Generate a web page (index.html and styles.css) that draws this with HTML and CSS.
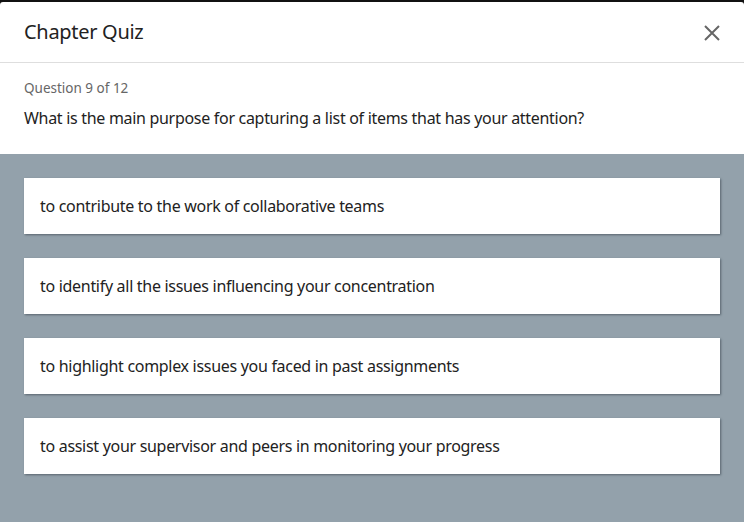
FILE: index.html
```html
<!DOCTYPE html>
<html>
<head>
<meta charset="utf-8">
<link rel="stylesheet" href="styles.css">
</head>
<body>
<div class="modal">
  <header class="modal-header">
    <h1 class="title">Chapter Quiz</h1>
    <button class="close" aria-label="Close">
      <svg width="16" height="16" viewBox="0 0 16 16"><path d="M1 1 L15 15 M15 1 L1 15" stroke="#666" stroke-width="2" fill="none"/></svg>
    </button>
  </header>
  <section class="question">
    <div class="counter">Question 9 of 12</div>
    <div class="prompt">What is the main purpose for capturing a list of items that has your attention?</div>
  </section>
  <section class="answers">
    <div class="answer">to contribute to the work of collaborative teams</div>
    <div class="answer">to identify all the issues influencing your concentration</div>
    <div class="answer">to highlight complex issues you faced in past assignments</div>
    <div class="answer">to assist your supervisor and peers in monitoring your progress</div>
  </section>
</div>
</body>
</html>
```
FILE: styles.css
```css
html, body { margin: 0; padding: 0; height: 100%; }
body {
  background: #111;
  padding-top: 2px;
  box-sizing: border-box;
  font-family: "Noto Sans", "Open Sans", sans-serif;
  overflow: hidden;
}
.modal {
  background: #fff;
  height: 100%;
  display: flex;
  flex-direction: column;
  border-radius: 3px 3px 0 0;
  overflow: hidden;
}
.modal-header {
  height: 60px;
  border-bottom: 1px solid #dedede;
  display: flex;
  align-items: center;
  justify-content: space-between;
  padding: 0 24px;
}
.title {
  margin: 0;
  font-size: 20px;
  font-weight: 400;
  color: #222;
  letter-spacing: -0.3px;
  margin-top: -2px;
}
.close {
  border: 0;
  background: none;
  padding: 0;
  width: 16px;
  height: 16px;
  display: flex;
  margin-top: 2px;
}
.question {
  padding: 16px 24px 25px;
}
.counter {
  font-size: 13.5px;
  color: #666;
  line-height: 18px;
}
.prompt {
  font-size: 16px;
  color: #222;
  line-height: 22px;
  margin-top: 10px;
  letter-spacing: -0.3px;
}
.answers {
  flex: 1;
  background: #93a1ab;
  padding: 24px;
  display: flex;
  flex-direction: column;
  gap: 24px;
}
.answer {
  background: #fff;
  height: 56px;
  box-sizing: border-box;
  display: flex;
  align-items: center;
  padding: 0 16px;
  font-size: 16px;
  color: #222;
  letter-spacing: -0.3px;
  box-shadow: 1px 1px 2px rgba(40, 50, 60, 0.55);
}
```
